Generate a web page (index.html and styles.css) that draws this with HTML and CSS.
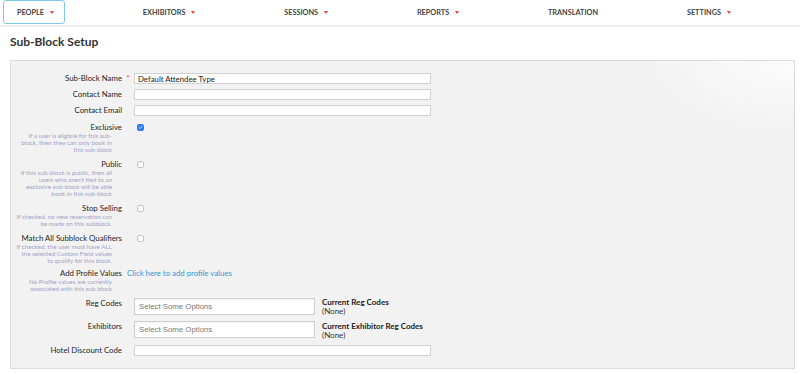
FILE: index.html
```html
<!DOCTYPE html>
<html>
<head>
<meta charset="utf-8">
<link rel="stylesheet" href="styles.css">
</head>
<body>
<nav class="nav">
  <div class="nav-item active">PEOPLE<span class="caret"></span></div>
  <div class="nav-item">EXHIBITORS<span class="caret"></span></div>
  <div class="nav-item">SESSIONS<span class="caret"></span></div>
  <div class="nav-item">REPORTS<span class="caret"></span></div>
  <div class="nav-item">TRANSLATION</div>
  <div class="nav-item">SETTINGS<span class="caret"></span></div>
</nav>
<h1 class="title">Sub-Block Setup</h1>
<div class="panel">
  <div class="row">
    <div class="lbl"><div class="lbl-text">Sub-Block Name</div></div>
    <div class="mark"><span class="req">*</span></div>
    <div class="field"><input class="text" type="text" value="Default Attendee Type"></div>
  </div>
  <div class="row">
    <div class="lbl"><div class="lbl-text">Contact Name</div></div>
    <div class="mark"></div>
    <div class="field"><input class="text" type="text" value=""></div>
  </div>
  <div class="row">
    <div class="lbl"><div class="lbl-text">Contact Email</div></div>
    <div class="mark"></div>
    <div class="field"><input class="text" type="text" value=""></div>
  </div>
  <div class="row">
    <div class="lbl">
      <div class="lbl-text">Exclusive</div>
      <div class="help">If a user is eligible for this sub-<br>block, then they can only book in<br>this sub-block</div>
    </div>
    <div class="mark"></div>
    <div class="field"><span class="check checked"><svg viewBox="0 0 8 8" width="7" height="7"><path d="M2 4.2 L3.4 5.5 L6 2.6" fill="none" stroke="#fff" stroke-width="1.1" stroke-linecap="round" stroke-linejoin="round"/></svg></span></div>
  </div>
  <div class="row">
    <div class="lbl">
      <div class="lbl-text">Public</div>
      <div class="help">If this sub-block is public, then all<br>users who aren't tied to an<br>exclusive sub-block will be able<br>book in this sub-block</div>
    </div>
    <div class="mark"></div>
    <div class="field"><span class="check"></span></div>
  </div>
  <div class="row">
    <div class="lbl">
      <div class="lbl-text">Stop Selling</div>
      <div class="help">If checked, no new reservation can<br>be made on this subblock.</div>
    </div>
    <div class="mark"></div>
    <div class="field"><span class="check"></span></div>
  </div>
  <div class="row">
    <div class="lbl">
      <div class="lbl-text">Match All Subblock Qualifiers</div>
      <div class="help">If checked, the user must have ALL<br>the selected Custom Field values<br>to qualify for this block.</div>
    </div>
    <div class="mark"></div>
    <div class="field"><span class="check"></span></div>
  </div>
  <div class="row row-profile">
    <div class="lbl">
      <div class="lbl-text">Add Profile Values</div>
      <div class="help">No Profile values are currently<br>associated with this sub block</div>
    </div>
    <div class="link-cell"><a class="link" href="#">Click here to add profile values</a></div>
  </div>
  <div class="row">
    <div class="lbl"><div class="lbl-text">Reg Codes</div></div>
    <div class="mark"></div>
    <div class="field field-select">
      <div class="select">Select Some Options</div>
      <div class="current"><div class="current-title">Current Reg Codes</div><div class="current-val">(None)</div></div>
    </div>
  </div>
  <div class="row">
    <div class="lbl"><div class="lbl-text">Exhibitors</div></div>
    <div class="mark"></div>
    <div class="field field-select">
      <div class="select">Select Some Options</div>
      <div class="current"><div class="current-title">Current Exhibitor Reg Codes</div><div class="current-val">(None)</div></div>
    </div>
  </div>
  <div class="row">
    <div class="lbl"><div class="lbl-text">Hotel Discount Code</div></div>
    <div class="mark"></div>
    <div class="field"><input class="text" type="text" value=""></div>
  </div>
</div>
</body>
</html>
```
FILE: styles.css
```css
* { box-sizing: border-box; }
html, body { margin: 0; padding: 0; background: #fff; }
body { font-family: Lato, "Open Sans", sans-serif; color: #333; font-size: 8px; line-height: 11px; }

.nav {
  height: 25px;
  display: flex;
  justify-content: space-between;
  align-items: flex-start;
  padding: 0 58px 0 3px;
  background: #fff;
  box-shadow: 0 1px 3px rgba(0,0,0,0.13);
  position: relative;
}
.nav-item {
  height: 24px;
  display: flex;
  align-items: center;
  padding: 0 10px 0 13px;
  font-size: 7.3px;
  font-weight: 700;
  color: #444;
  border: 1px solid transparent;
  border-radius: 3px;
}
.nav-item.active { border-color: #7ec8e9; }
.caret {
  width: 0; height: 0;
  margin-left: 6px;
  border-left: 2.5px solid transparent;
  border-right: 2.5px solid transparent;
  border-top: 3px solid #e8453c;
}

.title {
  margin: 0;
  padding: 9px 0 11px 10px;
  font-size: 12px;
  line-height: 15px;
  font-weight: 700;
  color: #333;
}

.panel {
  margin: 0 5px 0 10px;
  border: 1px solid #dcdcdc;
  background: radial-gradient(ellipse 150px 70px at 100% 0, #fcfcfc 0%, #f2f2f2 100%);
  background-color: #f2f2f2;
  padding: 12.3px 0 12px 0;
  display: flex;
  flex-direction: column;
  gap: 5.1px;
}
.row {
  display: grid;
  grid-template-columns: 111px 12px 1fr;
  align-items: start;
  font-size: 7.8px;
  line-height: 11px;
}
.lbl { text-align: right; }
.lbl-text {
  font-size: 7.8px;
  line-height: 11px;
  color: #262626;
  white-space: nowrap;
}
.help {
  margin-top: -1px;
  padding-right: 10px;
  font-size: 6.3px;
  line-height: 7.3px;
  color: #a4a2c6;
  white-space: nowrap;
}
.mark { text-align: center; font-size: 0; line-height: 0; }
.req { color: #e04040; font-size: 8px; line-height: 11px; }
.field { font-size: 0; line-height: 0; }

.text {
  display: block;
  width: 297px;
  height: 11px;
  margin: 0;
  padding: 0 3px;
  border: 1px solid #d2d2d2;
  background: #fff;
  font-family: Lato, sans-serif;
  font-size: 7.8px;
  color: #222;
  outline: none;
}

.check {
  display: flex;
  align-items: center;
  justify-content: center;
  width: 7px;
  height: 7px;
  margin: 2px 0 0 3px;
  border: 1px solid #c4c4c4;
  border-radius: 2px;
  background: #fff;
}
.check.checked { background: #2f7ff0; border-color: #2f7ff0; }
.check svg { display: block; }

.row-profile { margin-top: -1.5px; }
.link-cell { grid-column: 2 / 4; padding-left: 5px; }
.link {
  font-size: 7.8px;
  line-height: 11px;
  color: #2b9bd6;
  text-decoration: none;
  white-space: nowrap;
}

.field-select { display: flex; align-items: flex-start; gap: 7px; }
.select {
  width: 181px;
  height: 17px;
  border: 1px solid #cfcfcf;
  background: #fff;
  box-shadow: inset 0 1px 2px rgba(0,0,0,0.06);
  padding: 0 4px;
  font-family: "Liberation Sans", Arial, sans-serif;
  font-size: 7.8px;
  line-height: 15px;
  color: #777;
}
.current { font-size: 8px; line-height: 9px; color: #222; padding-top: 0.5px; }
.current-title { font-weight: 700; }
.current-val { color: #333; }
```
